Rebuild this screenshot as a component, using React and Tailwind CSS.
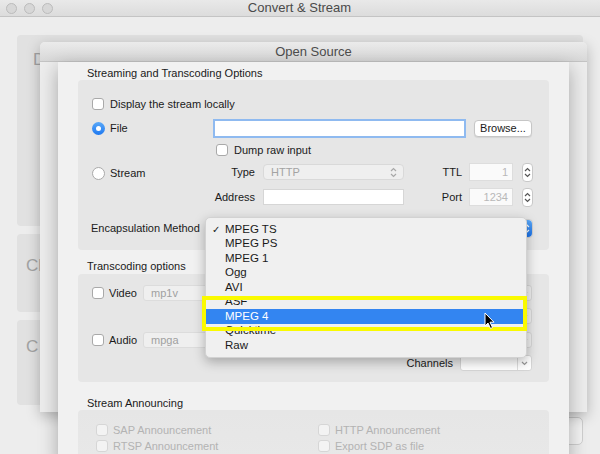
import React from 'react';

function Checkbox({ disabled }) {
  return (
    <span
      className={`inline-block h-[12px] w-[12px] shrink-0 rounded-[3px] border ${
        disabled ? 'border-[#d6d6d6] bg-[#f3f3f3]' : 'border-[#a9a9a9] bg-white'
      }`}
    />
  );
}

function Radio({ checked }) {
  if (checked) {
    return (
      <span className="flex h-[13px] w-[13px] shrink-0 items-center justify-center rounded-full bg-gradient-to-b from-[#5aa8f8] to-[#1b78f0]">
        <span className="h-[5px] w-[5px] rounded-full bg-white" />
      </span>
    );
  }
  return <span className="h-[13px] w-[13px] shrink-0 rounded-full border border-[#a9a9a9] bg-white" />;
}

function UpDown({ className = '' }) {
  return (
    <svg width="7" height="11" viewBox="0 0 7 11" className={className}>
      <path d="M1 4 L3.5 1.5 L6 4 M1 7 L3.5 9.5 L6 7" fill="none" stroke="currentColor" strokeWidth="1.2" />
    </svg>
  );
}

function Down({ className = '' }) {
  return (
    <svg width="7" height="5" viewBox="0 0 7 5" className={className}>
      <path d="M1 1 L3.5 3.5 L6 1" fill="none" stroke="currentColor" strokeWidth="1.2" />
    </svg>
  );
}

function Stepper() {
  return (
    <span className="flex h-[19px] w-[11px] flex-col items-center justify-center rounded-[4px] border border-[#c8c8c8] bg-white text-[#555]">
      <UpDown />
    </span>
  );
}

function GraySelect({ text, width }) {
  return (
    <span
      className={`flex h-[16px] ${width} items-center rounded-[3px] border border-[#dcdcdc] bg-[#efefef] pl-[7px] text-[11px] text-[#a0a0a0]`}
    >
      {text}
    </span>
  );
}

function RightSelect({ white }) {
  return (
    <span
      className={`flex h-[16px] w-[72px] items-center justify-end rounded-[3px] border border-[#d6d6d6] ${
        white ? 'bg-white' : 'bg-[#eeeeee]'
      }`}
    >
      <span className="flex h-full w-[14px] items-center justify-center border-l border-[#dedede] text-[#9a9a9a]">
        <Down />
      </span>
    </span>
  );
}

const menuItems = ['MPEG TS', 'MPEG PS', 'MPEG 1', 'Ogg', 'AVI', 'ASF', 'MPEG 4', 'Quicktime', 'Raw'];

export default function App() {
  return (
    <div className="relative h-[454px] w-[600px] overflow-hidden bg-[#ededed] font-['Liberation_Sans',Arial,sans-serif] text-[11px] text-[#1a1a1a]">
      {/* Convert & Stream window */}
      <div className="flex h-[17px] items-center border-b border-[#c4c4c4] bg-gradient-to-b from-[#e9e9e9] to-[#dcdcdc]">
        <div className="flex gap-[7px] pl-[6px]">
          <span className="h-[11px] w-[11px] rounded-full border border-[#bcbcbc] bg-[#d7d7d7]" />
          <span className="h-[11px] w-[11px] rounded-full border border-[#bcbcbc] bg-[#d7d7d7]" />
          <span className="h-[11px] w-[11px] rounded-full border border-[#bcbcbc] bg-[#d7d7d7]" />
        </div>
        <div className="flex-1 pr-[54px] text-center text-[13px] text-[#4a4a4a]">Convert &amp; Stream</div>
      </div>
      <div className="flex flex-col gap-[8px] pl-[17px] pr-[17px] pt-[18px]">
        <div className="h-[191px] rounded-[4px] bg-[#e1e1e1] pl-[16px] pt-[12px] text-[17px] text-[#a3a3a3]">D</div>
        <div className="h-[78px] rounded-[4px] bg-[#e1e1e1] pl-[9px] pt-[19px] text-[17px] text-[#a3a3a3]">Cl</div>
        <div className="h-[85px] rounded-[4px] bg-[#e1e1e1] pl-[9px] pt-[14px] text-[17px] text-[#a3a3a3]">C</div>
        <div className="mt-[4px] flex justify-end">
          <span className="h-[28px] w-[90px] rounded-[5px] border border-[#cfcfcf] bg-[#f4f4f4]" />
        </div>
      </div>

      {/* Open Source window */}
      <div className="absolute left-[40px] top-[42px] h-[370px] w-[547px] rounded-t-[5px] bg-[#ededed] shadow-[0_4px_14px_rgba(0,0,0,0.25)]">
        <div className="flex h-[20px] items-center justify-center rounded-t-[5px] border-b border-[#c4c4c4] bg-gradient-to-b from-[#ebebeb] to-[#d8d8d8] text-[13px] text-[#4d4d4d]">
          Open Source
        </div>
      </div>

      {/* Sheet */}
      <div className="absolute left-[58px] top-[62px] h-[400px] w-[511px] bg-[#f1f1f1] shadow-[0_6px_18px_rgba(0,0,0,0.3)]">
        <div className="pl-[29px] pt-[4px] leading-[14px]">Streaming and Transcoding Options</div>
        <div className="mx-[20px] flex h-[170px] flex-col rounded-[4px] bg-[#e6e6e6] pt-[12px]">
          <div className="flex h-[24px] items-center gap-[6px] pl-[14px]">
            <Checkbox />
            <span>Display the stream locally</span>
          </div>
          <div className="flex h-[24px] items-center">
            <div className="flex w-[135px] items-center gap-[5px] pl-[14px]">
              <Radio checked />
              <span>File</span>
            </div>
            <span className="h-[19px] w-[253px] border-2 border-[#8fbaf0] bg-white" />
            <span className="ml-[8px] flex h-[17px] w-[58px] items-center justify-center rounded-[4px] border border-[#c6c6c6] bg-white shadow-[0_1px_1px_rgba(0,0,0,0.08)]">
              Browse...
            </span>
          </div>
          <div className="flex h-[20px] items-center gap-[6px] pl-[138px]">
            <Checkbox />
            <span>Dump raw input</span>
          </div>
          <div className="flex h-[24px] items-center">
            <div className="flex w-[135px] items-center gap-[5px] pl-[14px] pt-[2px]">
              <Radio />
              <span>Stream</span>
            </div>
            <span className="w-[42px] text-right">Type</span>
            <span className="ml-[8px] flex h-[16px] w-[141px] items-center justify-between rounded-[4px] border border-[#d9d9d9] bg-[#efefef] pl-[7px] pr-[6px] text-[#a3a3a3]">
              HTTP
              <UpDown className="text-[#a8a8a8]" />
            </span>
            <span className="w-[58px] text-right">TTL</span>
            <span className="ml-[7px] flex h-[18px] w-[44px] items-center justify-end border border-[#dddddd] bg-[#fafafa] pr-[4px] text-[#b8b8b8]">
              1
            </span>
            <span className="ml-[9px]">
              <Stepper />
            </span>
          </div>
          <div className="flex h-[26px] items-center pl-[135px]">
            <span className="w-[42px] text-right">Address</span>
            <span className="ml-[8px] h-[16px] w-[141px] border border-[#d6d6d6] bg-white" />
            <span className="w-[58px] text-right">Port</span>
            <span className="ml-[7px] flex h-[18px] w-[44px] items-center justify-end border border-[#dddddd] bg-[#fafafa] pr-[4px] text-[#b8b8b8]">
              1234
            </span>
            <span className="ml-[9px]">
              <Stepper />
            </span>
          </div>
          <div className="mt-[6px] flex h-[24px] items-center">
            <span className="w-[127px] pl-[13px]">Encapsulation Method</span>
            <span className="flex h-[19px] w-[328px] justify-end rounded-[4px] border border-[#d0d0d0] bg-white">
              <span className="flex w-[12px] items-center justify-center rounded-r-[4px] bg-gradient-to-b from-[#5aa8f8] to-[#1a72ea] text-white">
                <UpDown />
              </span>
            </span>
          </div>
        </div>

        <div className="pl-[29px] pt-[9px] leading-[14px]">Transcoding options</div>
        <div className="mx-[20px] mt-[1px] flex h-[108px] flex-col rounded-[4px] bg-[#e6e6e6] pt-[8px]">
          <div className="flex h-[22px] items-center">
            <div className="flex w-[65px] items-center gap-[5px] pl-[14px]">
              <Checkbox />
              <span>Video</span>
            </div>
            <GraySelect text="mp1v" width="w-[200px]" />
            <span className="flex-1" />
            <span className="mr-[17px]">
              <RightSelect />
            </span>
          </div>
          <div className="flex h-[24px] items-center justify-end pr-[17px]">
            <RightSelect />
          </div>
          <div className="flex h-[24px] items-center">
            <div className="flex w-[65px] items-center gap-[5px] pl-[14px]">
              <Checkbox />
              <span>Audio</span>
            </div>
            <GraySelect text="mpga" width="w-[200px]" />
            <span className="flex-1" />
            <span className="mr-[17px]">
              <RightSelect />
            </span>
          </div>
          <div className="flex h-[22px] items-center justify-end gap-[7px] pr-[17px]">
            <span>Channels</span>
            <RightSelect white />
          </div>
        </div>

        <div className="pl-[29px] pt-[14px] leading-[14px]">Stream Announcing</div>
        <div className="mx-[20px] flex h-[70px] rounded-[4px] bg-gradient-to-b from-[#e6e6e6] to-[#e9e9e9] pt-[12px] text-[#b3b3b3]">
          <div className="flex w-[222px] flex-col pl-[18px]">
            <div className="flex h-[16px] items-center gap-[5px]">
              <Checkbox disabled />
              <span>SAP Announcement</span>
            </div>
            <div className="flex h-[16px] items-center gap-[5px]">
              <Checkbox disabled />
              <span>RTSP Announcement</span>
            </div>
          </div>
          <div className="flex flex-col pl-[18px]">
            <div className="flex h-[16px] items-center gap-[5px]">
              <Checkbox disabled />
              <span>HTTP Announcement</span>
            </div>
            <div className="flex h-[16px] items-center gap-[5px]">
              <Checkbox disabled />
              <span>Export SDP as file</span>
            </div>
          </div>
        </div>
      </div>

      {/* Popup menu */}
      <div className="absolute left-[205px] top-[217px] w-[322px] rounded-[5px] border border-[#d2d2d2] bg-[#f0f0f0] py-[4px] shadow-[0_4px_12px_rgba(0,0,0,0.28)]">
        {menuItems.map((item, i) => (
          <div
            key={item}
            className={`flex h-[14.5px] items-center text-[11.5px] ${
              i === 6 ? 'bg-[#3385f1] text-white' : 'text-[#1a1a1a]'
            }`}
          >
            <span className="w-[19px] pl-[6px] text-[10px]">{i === 0 ? '✓' : ''}</span>
            {item}
          </div>
        ))}
      </div>

      {/* Highlight marker */}
      <div className="absolute left-[202px] top-[296px] h-[35px] w-[325px] border-4 border-[#fafa00]" />

      {/* Cursor */}
      <svg className="absolute left-[484px] top-[312px]" width="12" height="18" viewBox="0 0 12 18">
        <path d="M1 1 L1 14 L4 11 L6.5 16.5 L8.5 15.5 L6 10.2 L10 10.2 Z" fill="#000" stroke="#fff" strokeWidth="1" />
      </svg>
    </div>
  );
}
